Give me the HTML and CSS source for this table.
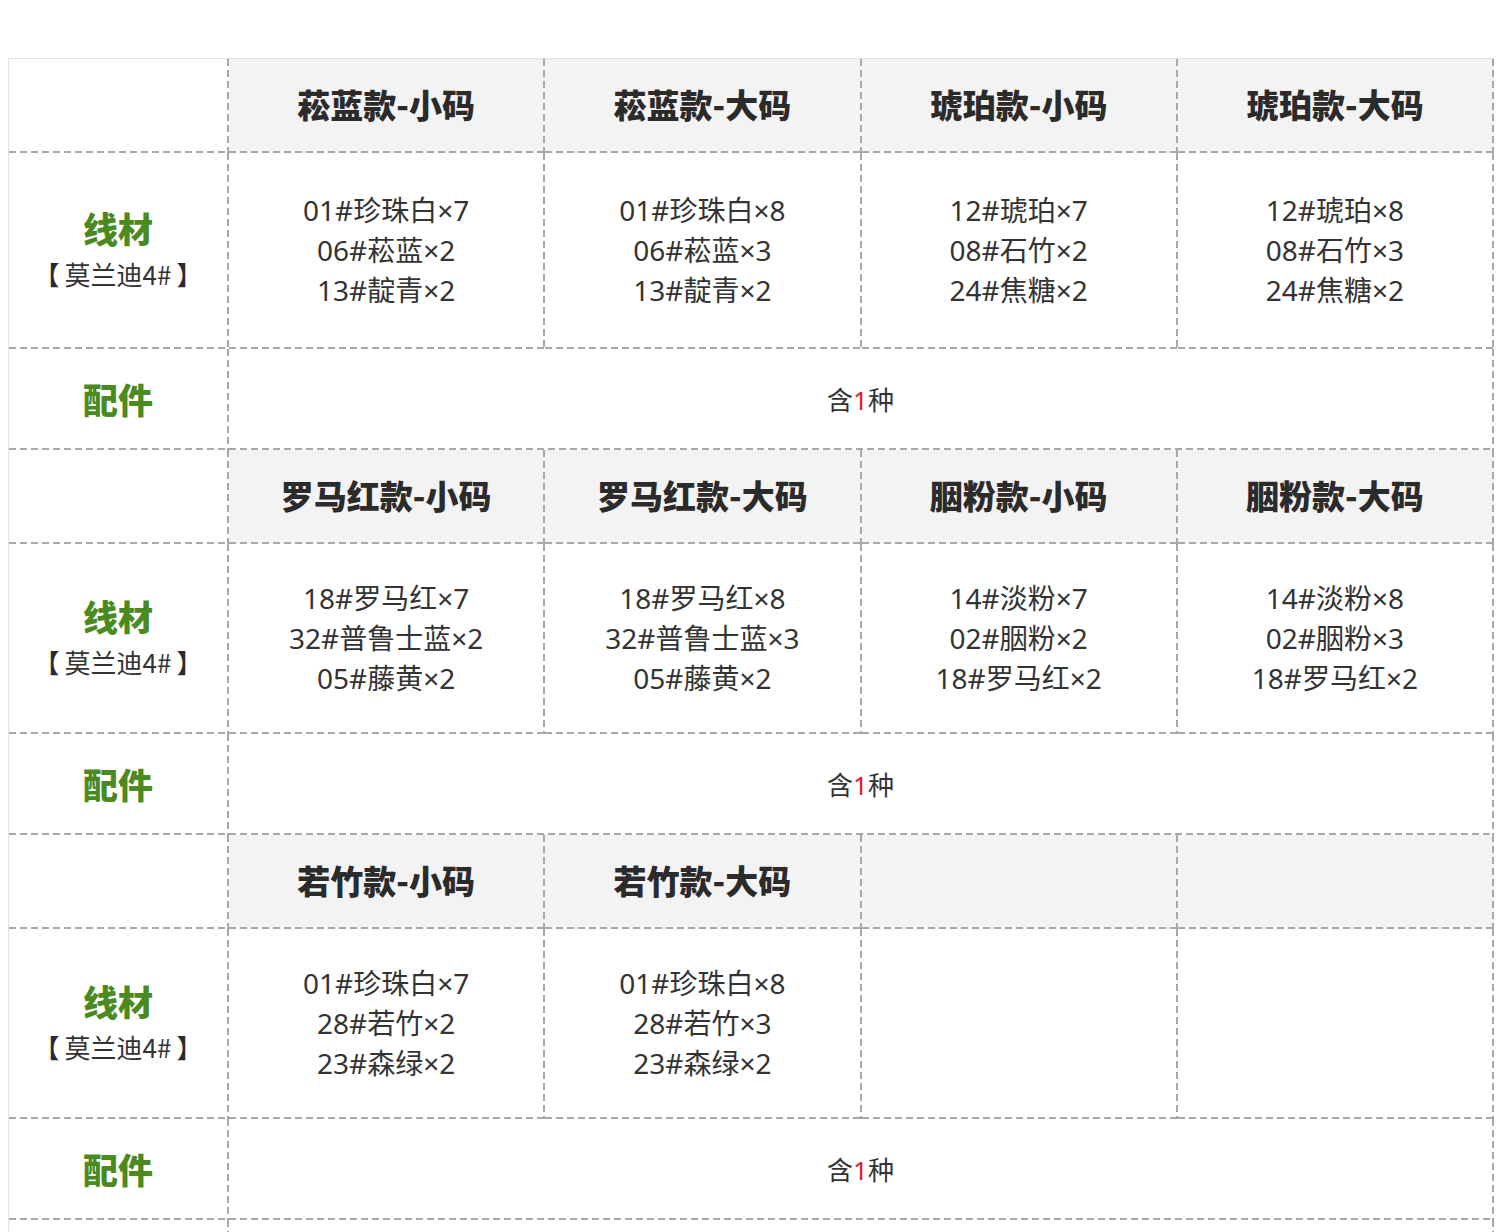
FILE: index.html
```html
<!DOCTYPE html>
<html lang="zh-CN">
<head>
<meta charset="utf-8">
<title>配色表</title>
<link rel="stylesheet" href="styles.css">
</head>
<body>
<div class="sheet">
  <section class="block tall">
    <div class="cell corner"></div>
    <div class="cell head">菘蓝款-小码</div>
    <div class="cell head">菘蓝款-大码</div>
    <div class="cell head">琥珀款-小码</div>
    <div class="cell head">琥珀款-大码</div>

    <div class="cell label"><b>线材</b><span><i class="lb">【</i>莫兰迪4#<i class="rb">】</i></span></div>
    <div class="cell item">01#珍珠白×7<br>06#菘蓝×2<br>13#靛青×2</div>
    <div class="cell item">01#珍珠白×8<br>06#菘蓝×3<br>13#靛青×2</div>
    <div class="cell item">12#琥珀×7<br>08#石竹×2<br>24#焦糖×2</div>
    <div class="cell item">12#琥珀×8<br>08#石竹×3<br>24#焦糖×2</div>

    <div class="cell label"><b>配件</b></div>
    <div class="cell acc"><p>含<em>1</em>种</p></div>
  </section>

  <section class="block">
    <div class="cell corner"></div>
    <div class="cell head">罗马红款-小码</div>
    <div class="cell head">罗马红款-大码</div>
    <div class="cell head">胭粉款-小码</div>
    <div class="cell head">胭粉款-大码</div>

    <div class="cell label"><b>线材</b><span><i class="lb">【</i>莫兰迪4#<i class="rb">】</i></span></div>
    <div class="cell item">18#罗马红×7<br>32#普鲁士蓝×2<br>05#藤黄×2</div>
    <div class="cell item">18#罗马红×8<br>32#普鲁士蓝×3<br>05#藤黄×2</div>
    <div class="cell item">14#淡粉×7<br>02#胭粉×2<br>18#罗马红×2</div>
    <div class="cell item">14#淡粉×8<br>02#胭粉×3<br>18#罗马红×2</div>

    <div class="cell label"><b>配件</b></div>
    <div class="cell acc"><p>含<em>1</em>种</p></div>
  </section>

  <section class="block">
    <div class="cell corner"></div>
    <div class="cell head">若竹款-小码</div>
    <div class="cell head">若竹款-大码</div>
    <div class="cell head"></div>
    <div class="cell head"></div>

    <div class="cell label"><b>线材</b><span><i class="lb">【</i>莫兰迪4#<i class="rb">】</i></span></div>
    <div class="cell item">01#珍珠白×7<br>28#若竹×2<br>23#森绿×2</div>
    <div class="cell item">01#珍珠白×8<br>28#若竹×3<br>23#森绿×2</div>
    <div class="cell item"></div>
    <div class="cell item"></div>

    <div class="cell label"><b>配件</b></div>
    <div class="cell acc"><p>含<em>1</em>种</p></div>
  </section>

  <section class="block tail">
    <div class="cell corner"></div>
    <div class="cell acc"></div>
  </section>
</div>
</body>
</html>
```

FILE: styles.css
```css
html, body {
  margin: 0;
  padding: 0;
  background: #ffffff;
}

body {
  font-family: "Noto Sans", "Noto Sans CJK SC", sans-serif;
  color: #333333;
}

.sheet {
  margin: 58px 0 0 8px;
  width: 1486px;
  box-sizing: border-box;
  border-top: 1px solid #e2e2e2;
  border-left: 1px solid #e2e2e2;
}

.block {
  display: grid;
  grid-template-columns: 220px repeat(4, 1fr);
  grid-template-rows: 94px 190px 101px;
}

.block.tall {
  grid-template-rows: 94px 196px 101px;
}

.block.tail {
  grid-template-rows: 60px;
}

.cell {
  box-sizing: border-box;
  padding: 0 2px 2px 0;
  background-image:
    repeating-linear-gradient(90deg, #a8a8a8 0 7px, transparent 7px 11px),
    repeating-linear-gradient(180deg, #a8a8a8 0 7px, transparent 7px 11px);
  background-size: 100% 2px, 2px 100%;
  background-position: left bottom, right top;
  background-repeat: no-repeat;
  display: flex;
  flex-direction: column;
  align-items: center;
  justify-content: center;
  text-align: center;
}

.corner {
  background-color: #ffffff;
}

.head {
  background-color: #f3f3f3;
  font-family: "Noto Sans CJK SC", sans-serif;
  font-size: 33px;
  font-weight: 900;
  color: #2b2b2b;
  padding-bottom: 4px;
}

.label b {
  font-family: "Noto Sans CJK SC", sans-serif;
  font-size: 35px;
  font-weight: 900;
  color: #4b8a1f;
  line-height: 44px;
}

.label span {
  font-family: "Noto Sans CJK SC", sans-serif;
  font-size: 26px;
  line-height: 40px;
  margin-top: 4px;
  color: #333333;
}

.label i {
  font-style: normal;
  color: #2a2a2a;
}

.label .lb {
  margin-right: 5px;
}

.label .rb {
  margin-left: 5px;
}

.item {
  font-size: 28px;
  line-height: 40px;
  color: #333333;
}

.acc {
  grid-column: 2 / span 4;
  font-size: 26px;
  color: #333333;
}

.acc p {
  margin: 0;
}

.acc em {
  font-style: normal;
  color: #e02020;
}

.tail .cell {
  background-size: 0 0, 2px 100%;
}
```
